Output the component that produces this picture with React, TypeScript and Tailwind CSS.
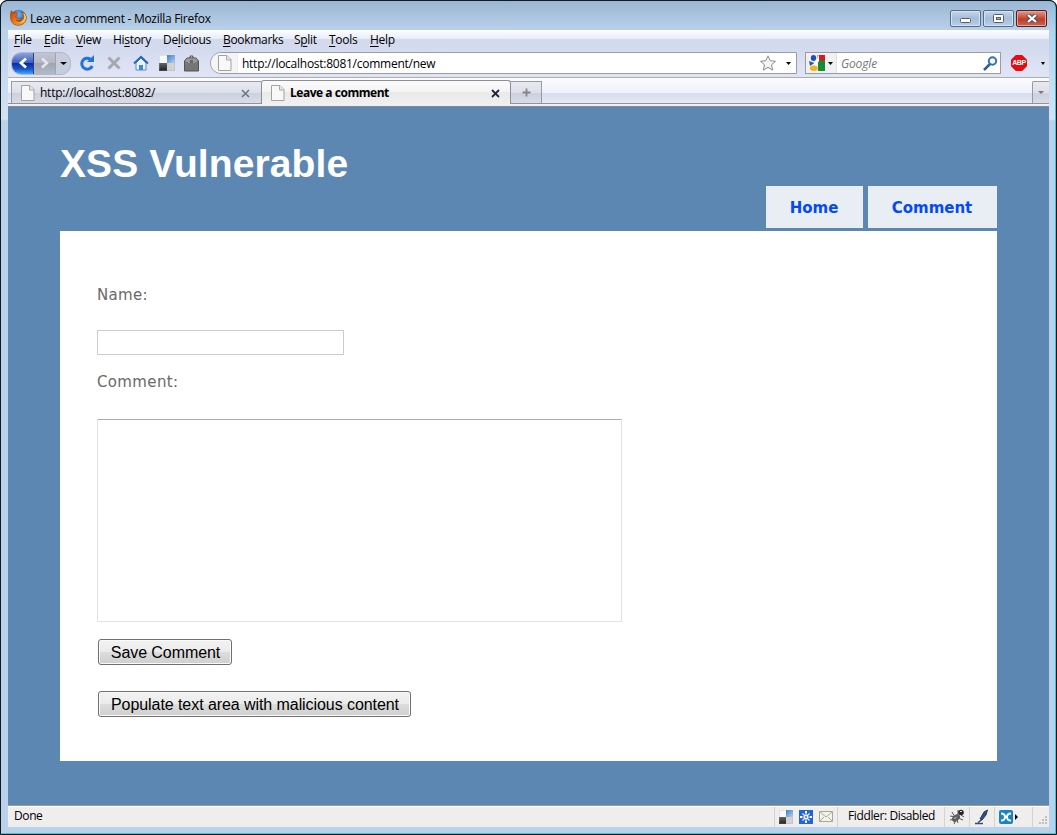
import React from "react";

const ui = "font-['Open_Sans','Noto_Sans',sans-serif] text-[12px] leading-[16px] text-black whitespace-nowrap";

const menus: [string, string, string, string][] = [
  ["", "F", "ile", "w-[30px]"],
  ["", "E", "dit", "w-[32px]"],
  ["", "V", "iew", "w-[37px]"],
  ["Hi", "s", "tory", "w-[50px]"],
  ["De", "l", "icious", "w-[60px]"],
  ["", "B", "ookmarks", "w-[71px]"],
  ["S", "p", "lit", "w-[35px]"],
  ["", "T", "ools", "w-[41px]"],
  ["", "H", "elp", "w-[37px]"],
];

function Firefox() {
  return (
    <svg width="17" height="17" viewBox="0 0 17 17" className="shrink-0">
      <defs>
        <radialGradient id="globe" cx=".5" cy=".3" r=".7">
          <stop offset="0" stopColor="#6fb4e8" />
          <stop offset="1" stopColor="#173a86" />
        </radialGradient>
        <linearGradient id="fox" x1="0" y1="0" x2="1" y2="1">
          <stop offset="0" stopColor="#c33d0c" />
          <stop offset=".5" stopColor="#ee7a14" />
          <stop offset="1" stopColor="#f9b41f" />
        </linearGradient>
      </defs>
      <circle cx="8.5" cy="8.5" r="7.8" fill="url(#globe)" />
      <path d="M1.2 1.800 3.300 3.500l2.900-.2 1.400 1.700-1 1.600-1 .5.900 1.800 2.400 1.200 2.600-.5c-1.200 2.200-4 2.500-5.400 1.200 2 3 7 1.800 7.400-2.200.3-2.400-.8-4.400-2.200-5.800 3.400 1 5.100 4 5.100 6.100 0 4.400-3.800 7.400-8 7.400C3.700 16.500.5 13 .5 8.800.5 6.200.4 4 1.200 1.800Z" fill="url(#fox)" stroke="#8f3a12" strokeWidth=".5" />
      <path d="M13.200 4c2.600 4 .7 8.800-4.200 9.500 3.500.6 6.800-1.700 6.900-5.500 0-1.600-1-3.200-2.700-4Z" fill="#fcd34d" />
    </svg>
  );
}

function Page() {
  return (
    <svg width="14" height="16" viewBox="0 0 14 16" className="shrink-0">
      <path d="M.5.5h8.500l4 4v11H.5Z" fill="#f8f8f8" stroke="#a2a2a2" />
      <path d="M8.500.5V5H13" fill="#e8e8e8" stroke="#a8a8a8" />
    </svg>
  );
}

function Caret({ className = "", fill = "#000", w = 5 }: { className?: string; fill?: string; w?: number }) {
  return (
    <svg width={w} height="3" viewBox="0 0 6 3" preserveAspectRatio="none" className={"shrink-0 " + className}>
      <path d="M0 0h6L3 3Z" fill={fill} />
    </svg>
  );
}

function Delicious({ size = 16 }: { size?: number }) {
  return (
    <svg width={size} height={size} viewBox="0 0 16 16" className="shrink-0">
      <defs>
        <linearGradient id="dk" x1="0" y1="0" x2="0" y2="1"><stop offset="0" stopColor="#666" /><stop offset="1" stopColor="#1c1c1c" /></linearGradient>
        <linearGradient id="bl" x1="0" y1="0" x2="1" y2="1"><stop offset="0" stopColor="#3d7ac8" /><stop offset="1" stopColor="#b4d3f2" /></linearGradient>
      </defs>
      <path d="M0 0h8v8H0Z" fill="#fafafa" />
      <path d="M8 0h8v8H8Z" fill="url(#bl)" />
      <path d="M0 8h8v8H0Z" fill="url(#dk)" />
      <path d="M8 8h8v8H8Z" fill="#d2d2d2" />
      <path d="M.5.5h15v15H.5Z" fill="none" stroke="#9ba4b1" strokeOpacity=".3" />
    </svg>
  );
}

const winBtn =
  "flex h-[17px] w-[31px] items-center justify-center rounded-[2px] border border-[#566b8a] bg-linear-to-b from-[#c5d6ea] via-[#a4bdd9] via-50% to-[#b8d0e9] shadow-[inset_0_0_0_1px_#d4e2f1]";

function TitleBar() {
  return (
    <div className="flex h-[29px] shrink-0 items-start pl-[9px] pr-[8px]">
      <div className="pt-[8px]"><Firefox /></div>
      <span className={ui + " ml-[3px] mt-[10px] tracking-[-0.28px]"}>Leave a comment - Mozilla Firefox</span>
      <div className="ml-auto mt-[9px] flex gap-[2px]">
        <div className={winBtn}>
          <svg width="11" height="5" viewBox="0 0 11 5" className="mt-[4px]"><rect x=".5" y=".5" width="10" height="4" rx="1" fill="#fff" stroke="#555d6c" /></svg>
        </div>
        <div className={winBtn}>
          <svg width="11" height="9" viewBox="0 0 11 9"><rect x=".5" y=".5" width="10" height="8" rx="1" fill="#fff" stroke="#555d6c" /><rect x="3.500" y="3.500" width="4" height="2" fill="#9fb7d2" stroke="#555d6c" /></svg>
        </div>
        <div className="flex h-[17px] w-[31px] items-center justify-center rounded-[2px] border border-[#5b1c20] bg-linear-to-b from-[#e09a8d] via-[#bf3b28] via-55% to-[#cc6450] shadow-[inset_0_0_0_1px_#e5a59c]">
          <svg width="12" height="9" viewBox="0 0 12 9"><path d="M1.500.5l9 8M10.500.5l-9 8" stroke="#4c5262" strokeWidth="4.200" /><path d="M2 1l8 7M10 1 2 8" stroke="#fff" strokeWidth="2.300" /></svg>
        </div>
      </div>
    </div>
  );
}

function MenuBar() {
  return (
    <div className="flex h-[20px] shrink-0 bg-[linear-gradient(180deg,#fff_0,#e7ebf6_9px,#d4daee_9px,#d5dbee_20px)] pl-[6px] pt-[2px]">
      {menus.map(([a, u, b, w]) => (
        <span key={u + b} className={`${ui} ${w} shrink-0 tracking-[-0.3px]`}>
          {a}<span className="underline decoration-1 underline-offset-[2px]">{u}</span>{b}
        </span>
      ))}
    </div>
  );
}

function NavBar() {
  return (
    <div className="flex h-[28px] shrink-0 items-center border-b border-[#a9adba] bg-linear-to-b from-[#d5dbef] to-[#e1e5f6] pl-[3px] pb-[1px]">
      <div className="flex h-[23px] w-[60px] shrink-0 items-center overflow-hidden rounded-[10px] border border-[#b2b8ca] bg-[#c7cddd]">
        <div className="flex h-full w-[22px] items-center justify-center border-r border-[#23418f] bg-[linear-gradient(180deg,#8ba3dc_0,#3c5cbd_10px,#0a2a9c_10px,#1a55c8_16px,#35b0f8_21px)]">
          <svg width="10" height="12" viewBox="0 0 10 12"><path d="M8 1.500 3 6l5 4.500" fill="none" stroke="#fff" strokeWidth="2.800" /></svg>
        </div>
        <div className="flex h-full w-[22px] items-center justify-center border-r border-[#9ea4b5] bg-[linear-gradient(180deg,#c1c5d0_0,#b4b8c4_10px,#a0a5b3_10px,#b4b9c6_21px)]">
          <svg width="10" height="12" viewBox="0 0 10 12"><path d="M2 1.500 7 6l-5 4.500" fill="none" stroke="#e3e6ee" strokeWidth="2.500" /></svg>
        </div>
        <Caret className="ml-[4px]" w={7} />
      </div>
      <svg width="16" height="16" viewBox="0 0 16 16" className="ml-[8px] shrink-0">
        <path d="M13.300 11A5.500 5.500 0 1 1 11.500 4.200" fill="none" stroke="#2372dc" strokeWidth="3" />
        <path d="M15 0v7H8Z" fill="#2372dc" />
      </svg>
      <svg width="14" height="14" viewBox="0 0 14 14" className="ml-[12px] shrink-0"><path d="M1.500 1.500l11 11M12.500 1.500l-11 11" stroke="#a6a8ae" strokeWidth="3" /></svg>
      <svg width="16" height="16" viewBox="0 0 16 16" className="ml-[12px] shrink-0">
        <path d="M3 8v7h10V8L8 3Z" fill="#eaf3fd" stroke="#5c8ac6" />
        <path d="M1 8.500 8 1.800l7 6.700" fill="none" stroke="#2867b8" strokeWidth="2" />
        <path d="M6 10h4v5H6Z" fill="#4385da" />
      </svg>
      <div className="ml-[10px] flex"><Delicious /></div>
      <svg width="15" height="17" viewBox="0 0 15 17" className="ml-[9px] shrink-0">
        <path d="M5.500 3.500 6.500 1h2l1 2.500" fill="none" stroke="#555" strokeWidth="1.200" />
        <path d="M3 3h9l2.500 3v10H.5V6Z" fill="#757575" stroke="#555" />
        <path d="M1 6 3.300 3.500h8.400L14 6l-4 2H5Z" fill="#9a9a9a" />
        <path d="M6 5h3v3H6Z" fill="#666" />
      </svg>
      <div className="ml-[11px] flex h-[22px] w-[587px] shrink-0 items-center overflow-hidden rounded-l-[11px] border border-[#9a9ca3] bg-white">
        <div className="flex h-full w-[27px] items-center border-r border-[#ececf0] bg-[#f4f4f6] pl-[7px]"><Page /></div>
        <span className={ui + " ml-[4px] mt-[2px] tracking-[-0.26px]"}>http://localhost:8081/comment/new</span>
        <svg width="16" height="16" viewBox="0 0 16 16" className="ml-auto mr-[10px] shrink-0">
          <path d="M8 .8l2.200 4.900 5.300.6-4 3.500 1.200 5.300L8 12.300l-4.700 2.800 1.200-5.300-4-3.500 5.300-.6Z" fill="#f5f5f5" stroke="#8b8b8b" />
        </svg>
        <Caret className="mr-[5px]" />
      </div>
      <div className="ml-[8px] flex h-[22px] w-[196px] shrink-0 items-center border border-[#9a9ca3] bg-white">
        <div className="flex h-full w-[31px] items-center border-r border-[#dedfe4] bg-[#f1f1f3] pl-[3px]">
          <svg width="16" height="16" viewBox="0 0 16 16" className="shrink-0">
            <path d="M8 0h8v6H9Z" fill="#e4151c" />
            <path d="M9 5.500h7V16H9Z" fill="#148c38" />
            <ellipse cx="4.500" cy="3" rx="2.700" ry="3" fill="#1e50bd" />
            <path d="M0 6l5.500 2L1 11Z" fill="#2858bd" />
            <path d="M6 6c2-.5 3-3 2.500-6l1.500.5v5c0 2-3 2-2 4L5 9Z" fill="#fff" />
            <ellipse cx="4.800" cy="13.300" rx="3.900" ry="2.700" fill="#efb71d" />
          </svg>
          <Caret className="ml-[3px]" w={5} />
        </div>
        <span className={ui + " ml-[4px] mt-[2px] italic !text-[#777] tracking-[-0.15px]"}>Google</span>
        <svg width="15" height="15" viewBox="0 0 15 15" className="ml-auto mr-[2px] shrink-0">
          <path d="M1 14l6-6" stroke="#28609e" strokeWidth="2.500" />
          <circle cx="9.500" cy="5" r="3.700" fill="#f0f7fe" stroke="#3572b2" strokeWidth="2" />
        </svg>
      </div>
      <div className="ml-[10px] flex h-[16px] w-[16px] shrink-0 items-center justify-center bg-[#e50d12] [clip-path:polygon(30%_0,70%_0,100%_30%,100%_70%,70%_100%,30%_100%,0_70%,0_30%)]">
        <span className="font-['Liberation_Sans',Arial,sans-serif] text-[7px] font-bold leading-[8px] tracking-[-0.4px] text-white">ABP</span>
      </div>
      <Caret className="ml-[14px]" w={4} />
    </div>
  );
}

const idleTab = "bg-[linear-gradient(180deg,#e8eaf1_0,#dcdfe8_11px,#cbd0df_11px,#dadde8_22px)]";

function TabBar() {
  return (
    <div className="flex h-[29px] shrink-0 flex-col">
      <div className="flex h-[26px] items-end border-b border-[#929399] bg-[linear-gradient(180deg,#fcfcff_0,#f0f2fb_15px,#d7dbed_15px,#e7eaf6_25px)] pl-[3px]">
        <div className={`${idleTab} flex h-[22px] w-[250px] items-center border-l border-t border-[#999aa2] pl-[9px]`}>
          <Page />
          <span className={ui + " ml-[5px] mt-px tracking-[-0.24px]"}>http://localhost:8082/</span>
          <svg width="9" height="9" viewBox="0 0 9 9" className="ml-auto mr-[11px] mt-px"><path d="M1 1l7 7M8 1 1 8" stroke="#6e7482" strokeWidth="1.500" /></svg>
        </div>
        <div className="-mb-px flex h-[24px] w-[250px] items-center rounded-t-[3px] border-x border-t border-[#8e8f95] bg-[linear-gradient(180deg,#fafafa_0,#f4f4f4_11px,#e9e9ea_11px,#efefef_23px)] pl-[9px]">
          <Page />
          <span className={ui + " ml-[5px] mt-px font-bold tracking-[-0.47px]"}>Leave a comment</span>
          <svg width="9" height="9" viewBox="0 0 9 9" className="ml-auto mr-[10px] mt-px"><path d="M1 1l7 7M8 1 1 8" stroke="#20273c" strokeWidth="1.800" /></svg>
        </div>
        <div className={`${idleTab} flex h-[22px] w-[31px] items-center justify-center border-r border-t border-[#999aa2]`}>
          <svg width="9" height="9" viewBox="0 0 9 9"><path d="M4.500.5v8M.5 4.500h8" stroke="#858585" strokeWidth="1.800" /></svg>
        </div>
        <div className={`${idleTab} ml-auto flex h-[22px] w-[17px] items-center justify-center rounded-tl-[2px] border-l border-t border-[#999aa2]`}>
          <Caret fill="#777" w={6} />
        </div>
      </div>
      <div className="h-[2px] bg-[#efefef]" />
      <div className="h-px bg-[#85888e]" />
    </div>
  );
}

const pageText = "font-['DejaVu_Sans',Verdana,sans-serif] whitespace-nowrap";
const push =
  "flex h-[26px] items-center justify-center rounded-[3px] border border-[#707070] bg-[linear-gradient(180deg,#f2f2f2_0,#ebebeb_12px,#dddddd_12px,#cfcfcf_24px)] shadow-[inset_0_0_0_1px_#fafafa] pl-px pt-[2px] font-['Liberation_Sans',Arial,sans-serif] text-[16px] leading-[18px] tracking-[-0.07px] text-black whitespace-nowrap";

function Content() {
  return (
    <main className="flex h-[698px] shrink-0 flex-col bg-[#5c87b2] pl-[52px] pr-[52px]">
      <div className="flex h-[124px] shrink-0 flex-col">
        <h1 className="mt-[34px] h-[45px] whitespace-nowrap font-['Liberation_Sans',Arial,sans-serif] text-[39px] font-bold leading-[46px] tracking-[0.1px] text-white">XSS Vulnerable</h1>
        <nav className={`${pageText} flex h-[42px] justify-end gap-[5px] text-[15px] font-bold leading-[44px] text-[#034af3]`}>
          <a className="w-[97px] bg-[#e8eef4] pr-px text-center">Home</a>
          <a className="w-[129px] bg-[#e8eef4] pr-px text-center">Comment</a>
        </nav>
      </div>
      <form className="flex h-[530px] shrink-0 flex-col items-start bg-white pl-[37px] pt-[54px]">
        <label className={`${pageText} h-[45px] text-[15px] leading-[20px] tracking-[0.3px] text-[#696969]`}>Name:</label>
        <input className="h-[25px] w-[247px] border border-[#ccc] outline-none" />
        <label className={`${pageText} mt-[17px] h-[47px] text-[15px] leading-[20px] tracking-[0.36px] text-[#696969]`}>Comment:</label>
        <textarea className="h-[203px] w-[525px] resize-none rounded-[1px] border border-[#e2e3ea] border-t-[#abadb3] outline-none" />
        <button type="button" className={`${push} ml-px mt-[17px] w-[134px]`}>Save Comment</button>
        <button type="button" className={`${push} ml-px mt-[26px] w-[313px]`}>Populate text area with malicious content</button>
      </form>
    </main>
  );
}

const cell = "flex h-[20px] items-center border-l border-[#d5d2d2] pl-[4px]";

function StatusBar() {
  return (
    <footer className="flex h-[22px] shrink-0 items-center border-t border-[#9a9a9a] bg-[#f0eded] pl-[6px] shadow-[inset_0_1px_0_#fff]">
      <span className={ui + " mb-[2px] tracking-[-0.4px]"}>Done</span>
      <div className={`${cell} ml-auto w-[63px] gap-[6px]`}>
        <Delicious size={14} />
        <svg width="14" height="14" viewBox="0 0 14 14" className="shrink-0">
          <path d="M0 0h14v14H0Z" fill="#2265d5" />
          <path d="M7 2v10M2 7h10M3.500 3.500l7 7M10.500 3.500l-7 7" stroke="#e7f0ff" strokeWidth="1.200" />
          <circle cx="7" cy="7" r="1.500" fill="#2265d5" stroke="#fff" />
          <path d="M6 1h2v2H6ZM6 11h2v2H6ZM1 6h2v2H1ZM11 6h2v2h-2Z" fill="#fff" />
        </svg>
        <svg width="14" height="11" viewBox="0 0 14 11" className="shrink-0"><path d="M.5.5h13v10H.5Z" fill="#f4f3e9" stroke="#a7a798" /><path d="M1 1l6 5 6-5M1 10l4-4M13 10 9 6" fill="none" stroke="#aaa99c" /></svg>
      </div>
      <div className={`${cell} w-[107px]`}>
        <span className={ui + " mb-[2px] ml-[6px] tracking-[-0.38px]"}>Fiddler: Disabled</span>
      </div>
      <div className={`${cell} w-[25px]`}>
        <svg width="16" height="16" viewBox="0 0 16 16">
          <path d="M3 3l3 5M1 7l6 1M1 11l5-1M5 15l2-4M9 14l-1-4M14 11l-5-2M9 1v4M12 6l3 2" stroke="#555" />
          <ellipse cx="7" cy="9" rx="4.500" ry="3" transform="rotate(-40 7 9)" fill="#5c5c5c" />
          <circle cx="12" cy="3.500" r="2.800" fill="#292929" />
          <path d="M11 2h2v1h-2ZM5 9l3-1-2 2Z" fill="#ddd" />
        </svg>
      </div>
      <div className={`${cell} w-[25px]`}>
        <svg width="15" height="16" viewBox="0 0 15 16"><path d="M13.500 1 10 3 6 10l2 1 4-5Z" fill="#2f4f7c" stroke="#253e64" /><path d="M1 14.500h8M4 13.500l4-3" stroke="#354e73" strokeWidth="1.500" /></svg>
      </div>
      <div className={`${cell} w-[38px]`}>
        <svg width="20" height="14" viewBox="0 0 20 14">
          <rect width="14" height="14" rx="2" fill="#1684c5" />
          <path d="M2 3.500c3 0 4 1.500 4 3.500s-1 3.500-4 3.500M12 3.500c-3 0-4 1.500-4 3.500s1 3.500 4 3.500M6 7h2" fill="none" stroke="#fff" strokeWidth="1.900" />
          <path d="M16 4v6l3-3Z" fill="#000" />
        </svg>
      </div>
      <div className="flex h-[20px] w-[17px] items-end justify-end border-l border-[#d5d2d2] pb-[2px] pr-[1px]">
        <svg width="9" height="9" viewBox="0 0 9 9"><path d="M6 0h2v2H6ZM3 3h2v2H3ZM6 3h2v2H6ZM0 6h2v2H0ZM3 6h2v2H3ZM6 6h2v2H6Z" fill="#c0bebe" /></svg>
      </div>
    </footer>
  );
}

export default function App() {
  return (
    <div className="h-[835px] w-[1057px] overflow-hidden bg-white">
      <div className="h-full w-full overflow-hidden rounded-t-[7px] border border-[#111820] bg-black">
        <div className="flex h-full w-full flex-col overflow-hidden rounded-t-[6px] border-b border-r border-[#3cc6dc] bg-[linear-gradient(180deg,#9bb6d3_0,#b9d1ea_29px,#d3e2f2_118px,#b9d1ea_120px,#b9d1ea_100%)]">
          <TitleBar />
          <div className="ml-[7px] mr-[6px] flex flex-col">
            <MenuBar />
            <NavBar />
            <TabBar />
            <Content />
            <StatusBar />
          </div>
        </div>
      </div>
    </div>
  );
}
